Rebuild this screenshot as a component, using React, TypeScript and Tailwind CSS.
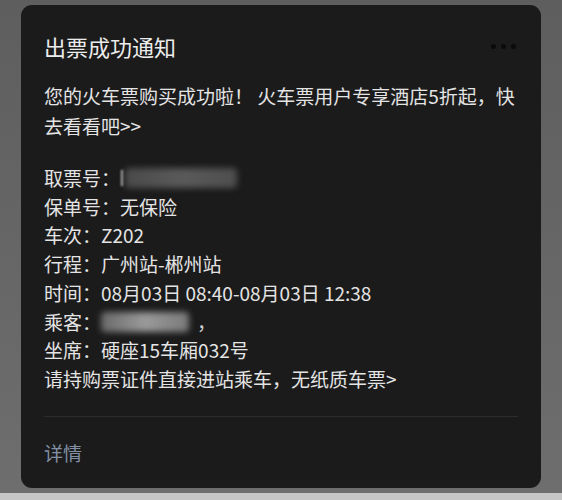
// @ts-nocheck

// --- TICKET LINES ---
const LINES = [
  { label: '保单号：', value: '无保险' },
  { label: '车次：', value: 'Z202' },
  { label: '行程：', value: '广州站-郴州站' },
  { label: '时间：', value: '08月03日 08:40-08月03日 12:38' },
];

const FONT = "font-['Noto_Sans_CJK_SC','Noto_Sans',sans-serif]";

// blurred-out private data
const Smudge = ({ className }: { className: string }) => (
  <span className={`inline-block align-middle rounded-sm blur-[3px] ${className}`} />
);

export default function App() {
  return (
    <div className={`w-[562px] h-[500px] bg-[#686868] flex flex-col overflow-hidden ${FONT}`}>
      <div className="flex-1 px-[21px] pt-[5px] bg-gradient-to-b from-[#5e5e5e] to-[#6e6e6e]">
        <div className="h-[483px] rounded-[11px] bg-[#1b1b1b] px-[23px] pt-[26px] text-[#e4e4e4]">
          {/* Header */}
          <div className="flex items-center justify-between h-[30px]">
            <div className="text-[22px] leading-[30px] text-[#ececec]">出票成功通知</div>
            <div className="flex gap-[5px] pr-[2px]">
              <span className="w-[5px] h-[5px] rounded-full bg-[#0b0b0b]" />
              <span className="w-[5px] h-[5px] rounded-full bg-[#0b0b0b]" />
              <span className="w-[5px] h-[5px] rounded-full bg-[#0b0b0b]" />
            </div>
          </div>

          {/* Promo */}
          <p className="mt-[20px] text-[19px] leading-[30px]">
            您的火车票购买成功啦！ 火车票用户专享酒店5折起，快去看看吧&gt;&gt;
          </p>

          {/* Ticket info */}
          <div className="mt-[23px] text-[19px] leading-[28.7px]">
            <div className="flex items-center">
              <span>取票号：</span>
              <span className="inline-block w-[2px] h-[16px] bg-[#bdbdbd] blur-[1px] ml-[1px]" />
              <Smudge className="w-[112px] h-[20px] bg-gradient-to-r from-[#4a4a4a] via-[#5a5a5a] to-[#4e4e4e] ml-[2px]" />
            </div>
            {LINES.map((l) => (
              <div key={l.label}>
                <span>{l.label}</span>
                <span>{l.value}</span>
              </div>
            ))}
            <div className="flex items-center">
              <span>乘客：</span>
              <Smudge className="w-[88px] h-[20px] bg-gradient-to-r from-[#6a6a6a] via-[#9a9a9a] to-[#7a7a7a]" />
              <span className="ml-[8px] text-[#cfcfcf]">，</span>
            </div>
            <div>坐席：硬座15车厢032号</div>
            <div>请持购票证件直接进站乘车，无纸质车票&gt;</div>
          </div>

          <div className="mt-[22px] h-px bg-[#2c2c2c]" />

          <div className="mt-[21px] text-[19px] leading-[30px] text-[#8391a6]">详情</div>
        </div>
      </div>
      <div className="h-[7px] bg-[#c6c6c6]" />
    </div>
  );
}
